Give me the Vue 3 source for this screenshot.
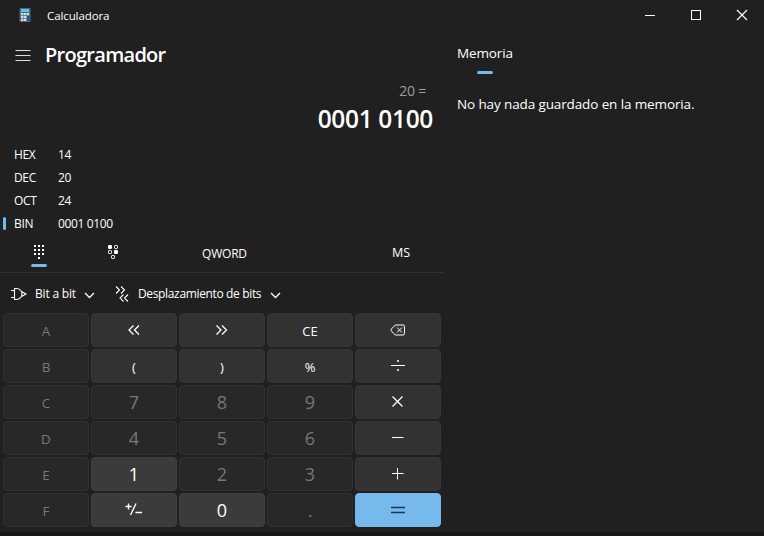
<script setup>
const radices = [
  { name: 'HEX', value: '14' },
  { name: 'DEC', value: '20' },
  { name: 'OCT', value: '24' },
  { name: 'BIN', value: '0001 0100', active: true }
]

const off = (label) => ({ label, kind: 'off' })
const keys = [
  { label: 'A', kind: 'off letter' }, { icon: 'lsh', kind: 'op' }, { icon: 'rsh', kind: 'op' }, { label: 'CE', kind: 'op' }, { icon: 'back', kind: 'op' },
  { label: 'B', kind: 'off letter' }, { label: '(', kind: 'op' }, { label: ')', kind: 'op' }, { label: '%', kind: 'op' }, { icon: 'div', kind: 'op' },
  { label: 'C', kind: 'off letter' }, off('7'), off('8'), off('9'), { icon: 'mul', kind: 'op' },
  { label: 'D', kind: 'off letter' }, off('4'), off('5'), off('6'), { icon: 'sub', kind: 'op' },
  { label: 'E', kind: 'off letter' }, { label: '1', kind: 'num' }, off('2'), off('3'), { icon: 'add', kind: 'op' },
  { label: 'F', kind: 'off letter' }, { icon: 'neg', kind: 'num' }, { label: '0', kind: 'num' }, off('.'), { icon: 'eq', kind: 'equals' }
]

const icons = {
  lsh: 'M8.500 4.500 4 9l4.500 4.500M14 4.500 9.500 9l4.500 4.500',
  rsh: 'M3.500 4.500 8 9l-4.500 4.500M9 4.500 13.500 9 9 13.500',
  back: 'M6.200 4H14a1.500 1.500 0 0 1 1.500 1.500V12.500a1.500 1.500 0 0 1-1.500 1.500H6.200L2.200 9.800V8.200ZM8 6.500l5 5M13 6.500l-5 5',
  div: 'M2 8.500H16M8.500 3.500h1v1h-1zM8.500 12.500h1v1h-1z',
  mul: 'M3.500 3.500l10 10M13.500 3.500l-10 10',
  sub: 'M3 8.500H14.500',
  add: 'M3 8.500H14.500M8.500 3V14.500',
  neg: 'M.500 5.500H6.500M3.500 2.500V8.500M5.500 14 11 2.500M10.500 11.500H17',
  eq: 'M2 6.500H16M2 11.500H16'
}
</script>

<template>
  <div class="window">
    <header class="titlebar">
      <svg class="app-icon" width="12" height="16" viewBox="0 0 12 16">
        <rect x="0.500" y="1" width="11" height="14" rx="1" fill="#5d6870" />
        <rect x="2" y="2" width="8" height="3" fill="#45cdf3" />
        <path d="M2 6h2.500v2.300H2zM5 6h2.500v2.300H5zM8 6h2v2.300H8zM2 9h2.500v2.300H2zM5 9h2.500v2.300H5zM2 12h2.500v2H2zM5 12h2.500v2H5z" fill="#d3dce2" />
        <rect x="8" y="9" width="2.500" height="5" fill="#075a9c" />
      </svg>
      <span class="app-name">Calculadora</span>
      <div class="controls">
        <svg width="46" height="30"><path d="M19 15.500h10" /></svg>
        <svg width="46" height="30"><rect x="19.500" y="10.500" width="9" height="9" /></svg>
        <svg width="46" height="30"><path class="close" d="m19 10 10 10M29 10l-10 10" /></svg>
      </div>
    </header>
    <div class="body">
      <main class="calculator">
        <div class="mode">
          <svg width="16" height="12"><path d="M.500 1.500h15M.500 6.500h15M.500 11.500h15" /></svg>
          <h1>Programador</h1>
        </div>
        <div class="expression">20 =</div>
        <div class="result">0001 0100</div>
        <ul class="radices">
          <li v-for="r in radices" :key="r.name" :class="{ active: r.active }">
            <span class="radix">{{ r.name }}</span><span class="value">{{ r.value }}</span>
          </li>
        </ul>
        <nav class="tools">
          <div class="tool pad">
            <svg width="12" height="16" viewBox="0 0 12 16"><path class="solid" d="M1 1h2v2H1zM5 1h2v2H5zM9 1h2v2H9zM1 5h2v2H1zM5 5h2v2H5zM9 5h2v2H9zM1 9h2v2H1zM5 9h2v2H5zM9 9h2v2H9zM5 13h2v2H5z" /></svg>
            <i></i>
          </div>
          <div class="tool bits">
            <svg width="12" height="16" viewBox="0 0 12 16">
              <rect class="solid" x="1" y="1" width="4" height="4" rx="1.300" />
              <rect x="7.500" y="1.500" width="3" height="3" rx=".7" />
              <rect x="1.500" y="6.500" width="3" height="3" rx=".7" />
              <rect class="solid" x="7" y="6" width="4" height="4" rx="1.300" />
              <rect x="4.500" y="11.500" width="3" height="3" rx=".7" />
            </svg>
          </div>
          <span class="word">QWORD</span>
          <span class="store">MS</span>
        </nav>
        <div class="menus">
          <svg width="18" height="16"><path d="M1 4.500h3.500M1 11.500h3.500M4 2.500h2.500a5.500 5.500 0 0 1 0 11H4M4.500 2.500v11M12 5.700l4 2.300-4 2.300" /></svg>
          <span class="bitwise">Bit a bit</span>
          <svg class="chevron" width="12" height="8"><path d="m1 2 4.500 4.500L10 2" /></svg>
          <svg class="shift" width="14" height="18"><path d="m1 1.500 3.500 3.500L1 8.500M6 1.500 9.500 5 6 8.500M8.500 9.500 5 13l3.500 3.500M13 9.500 9.500 13l3.500 3.500" /></svg>
          <span class="shifts">Desplazamiento de bits</span>
          <svg class="chevron" width="12" height="8"><path d="m1 2 4.500 4.500L10 2" /></svg>
        </div>
        <div class="keypad">
          <button v-for="(k, i) in keys" :key="i" :class="k.kind">
            <svg v-if="k.icon" :class="k.icon" width="18" height="18"><path :d="icons[k.icon]" /></svg>
            <span v-else>{{ k.label }}</span>
          </button>
        </div>
      </main>
      <aside class="memory">
        <h2>Memoria</h2>
        <i></i>
        <p>No hay nada guardado en la memoria.</p>
      </aside>
    </div>
    <footer></footer>
  </div>
</template>

<style>
body { margin: 0; background: #202020; overflow: hidden; }
</style>

<style scoped>
* { box-sizing: border-box; }
.window { width: 764px; height: 536px; display: flex; flex-direction: column; background: #202020; color: #fff; font: 12px/16px "Open Sans", "Noto Sans", sans-serif; white-space: nowrap; }
svg { display: block; flex: none; fill: none; stroke: #fff; stroke-width: 1; }
.solid { fill: #fff; stroke: none; }
.close { stroke-width: 1.200; }
.titlebar { height: 31px; flex: none; display: flex; align-items: flex-start; padding-left: 19px; }
.app-icon { margin-top: 7px; stroke: none; }
.app-name { margin: 8px 0 0 16px; font-size: 11.500px; letter-spacing: -0.100px; }
.controls { display: flex; margin-left: auto; }
.body { display: flex; height: 501px; flex: none; }
.calculator { width: 445px; }
.mode { height: 48px; display: flex; align-items: center; padding-left: 15px; }
.mode svg { stroke: #ddd; margin-top: -1px; }
h1 { margin: 0 0 0 14px; font-size: 20px; line-height: 28px; font-weight: 600; letter-spacing: -0.720px; }
.expression { height: 24px; padding-right: 19px; text-align: right; color: #9e9e9e; font-size: 14px; letter-spacing: -0.200px; line-height: 24px; }
.result { height: 33px; padding-right: 12px; text-align: right; font-size: 24.500px; line-height: 31px; font-weight: 600; letter-spacing: -0.350px; }
.radices { margin: 7px 0 0; padding: 0; list-style: none; }
.radices li { height: 23px; display: flex; align-items: center; padding-left: 3px; font-size: 12px; letter-spacing: -0.350px; }
.radices li::before { content: ""; width: 3px; height: 13px; margin: -1px 8px 0 0; border-radius: 2px; }
.radices .active::before { background: #76b9ed; }
.radix { width: 44px; }
.tools { height: 37px; display: flex; align-items: flex-start; border-bottom: 1px solid #303030; margin-top: 1px; }
.tool { display: flex; flex-direction: column; align-items: center; width: 16px; padding-top: 8px; }
.pad { margin-left: 31px; }
.pad i, .memory i { display: block; width: 16px; height: 3px; border-radius: 2px; background: #76b9ed; }
.pad i { margin-top: 4px; }
.bits { margin-left: 58px; }
.word { margin: 10px 0 0 81px; width: 46px; letter-spacing: -0.200px; }
.store { margin: 9px 0 0 144px; font-size: 12.500px; }
.menus { height: 40px; display: flex; align-items: center; padding: 2px 0 0 10px; }
.menus span { font-size: 12px; letter-spacing: -0.350px; }
.menus svg { stroke-width: 1.100; }
.menus .bitwise { width: 49px; margin-left: 7px; letter-spacing: -0.200px; }
.menus .chevron { margin-top: 1px; stroke-width: 1.300; }
.shift { margin: 0 9px 0 19px; }
.shifts { width: 132px; }
.keypad { display: grid; grid-template-columns: repeat(5, 86px); grid-auto-rows: 34px; gap: 2px; padding-left: 3px; }
button { display: flex; align-items: center; justify-content: center; margin: 0; padding: 0; border: 1px solid #353535; border-radius: 4px; background: #323232; color: #fff; font: 13px/20px "Open Sans", "Noto Sans", sans-serif; }
button.op span, button.letter span { padding-top: 1px; }
button.off { background: #282828; border-color: #303030; color: #777; font-size: 18px; }
button.letter { font-size: 13.500px; }
button.num { background: #3b3b3b; border-color: #404040; font-size: 18px; font-weight: 500; }
button.num svg { stroke-width: 1.400; }
.lsh, .rsh, .mul { stroke-width: 1.300; }
.div path { stroke-width: 1; }
button.equals { background: #76b9ed; border-color: #76b9ed; }
.equals svg { stroke: #1b3850; stroke-width: 1.400; }
.memory { padding-left: 12px; }
h2 { margin: 12px 0 0; font-size: 13.500px; line-height: 20px; font-weight: 400; letter-spacing: -0.120px; }
.memory i { margin: 8px 0 0 20px; }
p { margin: 20px 0 0; font-size: 13.500px; line-height: 20px; letter-spacing: -0.120px; }
footer { height: 4px; background: #181617; }
</style>
